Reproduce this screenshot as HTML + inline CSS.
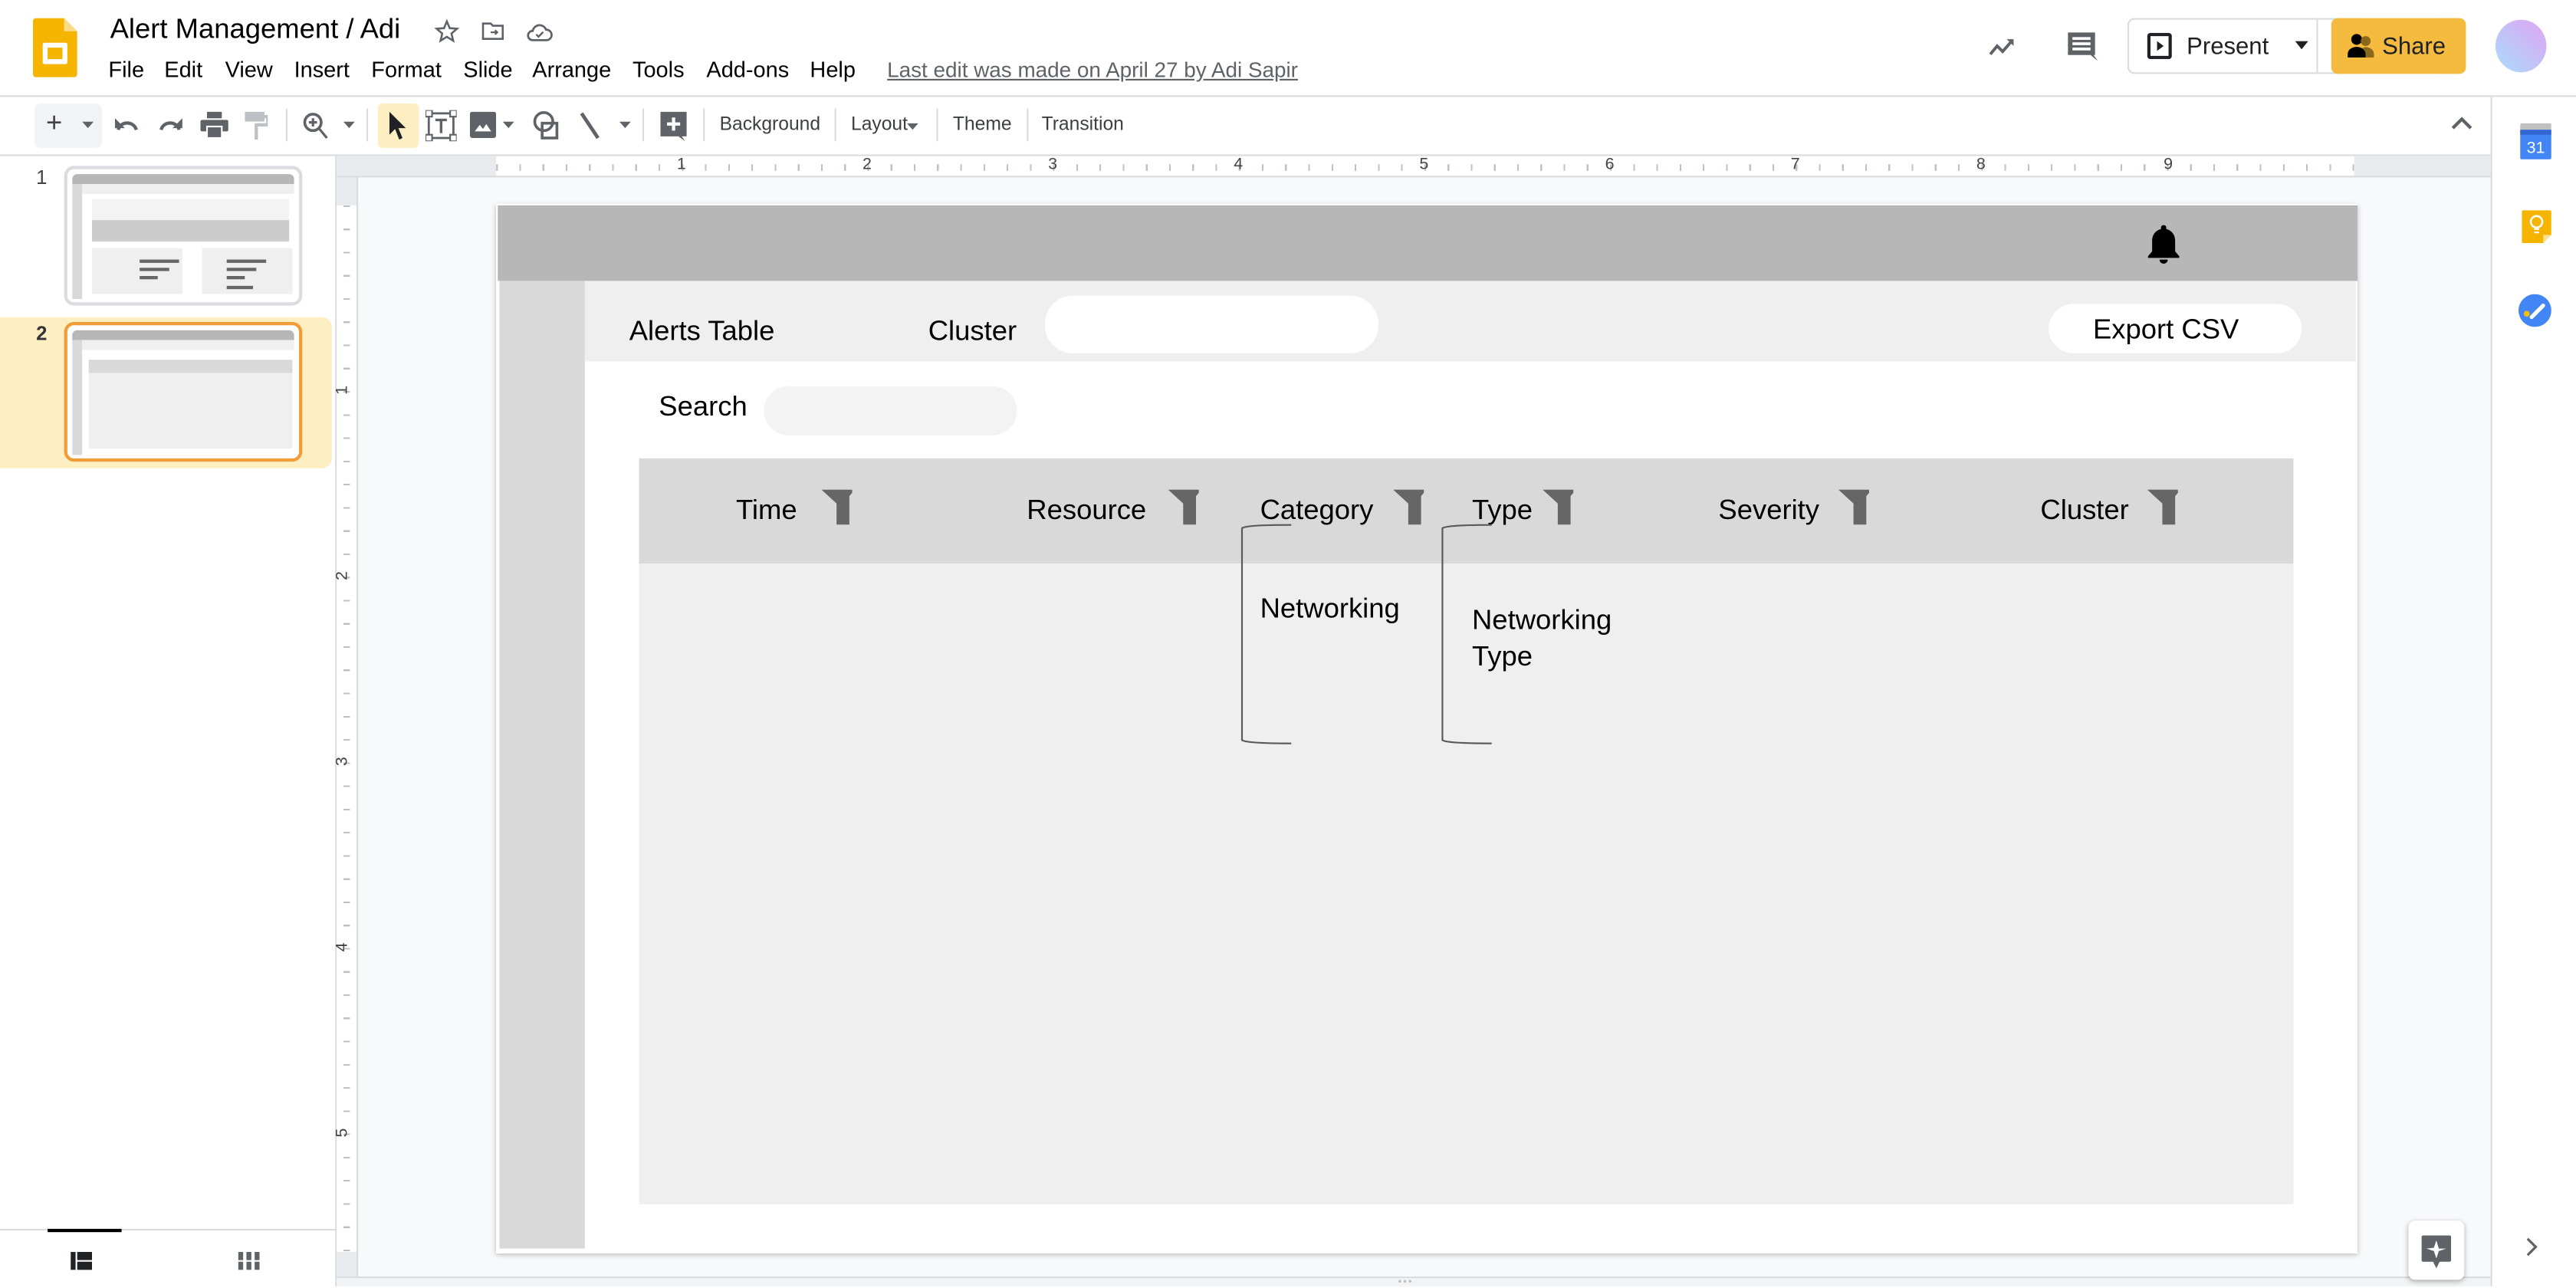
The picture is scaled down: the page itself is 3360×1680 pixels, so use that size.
<!DOCTYPE html>
<html><head><meta charset="utf-8">
<style>
*{box-sizing:border-box;margin:0;padding:0}
html,body{width:3360px;height:1678px;overflow:hidden;background:#fff}
#w{position:absolute;left:0;top:0;width:1568px;height:783px;transform:scale(2.142857);transform-origin:0 0;font-family:"Liberation Sans",Arial,sans-serif;color:#202124}
.a{position:absolute}
.mi{position:absolute;top:35px;font-size:13.5px;color:#000}
.tb{font-size:11.5px;color:#3c4043;top:70px}
.sep{position:absolute;top:66px;width:1px;height:20px;background:#dadce0}
.h{position:absolute;top:301px;font-size:17px;color:#000}
.f{position:absolute;top:298px}
.st{font-size:17px;color:#000;position:absolute}
</style></head><body><div id="w">

<!-- logo -->
<svg class="a" style="left:20px;top:11px" width="27" height="36" viewBox="0 0 27 36"><path d="M2 0h17l8 8v26a2 2 0 0 1-2 2H2a2 2 0 0 1-2-2V2a2 2 0 0 1 2-2z" fill="#f4b400"/><path d="M19 0l8 8h-8z" fill="#fadb86"/><rect x="6" y="15" width="15" height="13" rx="1" fill="#fff"/><rect x="9" y="18" width="9" height="7" fill="#f4b400"/></svg>
<div class="a" style="left:67px;top:8px;font-size:17px;color:#000">Alert Management / Adi</div>
<svg class="a" style="left:264px;top:11px" width="16" height="16" viewBox="0 0 24 24"><path d="M12 3l2.6 6.2 6.7.5-5.1 4.4 1.6 6.6L12 17.1 6.2 20.7l1.6-6.6-5.1-4.4 6.7-.5z" fill="none" stroke="#5f6368" stroke-width="1.8"/></svg>
<svg class="a" style="left:292px;top:11px" width="16" height="16" viewBox="0 0 24 24"><path d="M3 5h7l2 2h9v12H3z" fill="none" stroke="#5f6368" stroke-width="1.8"/><path d="M10 13h6m-2-2l2 2-2 2" fill="none" stroke="#5f6368" stroke-width="1.6"/></svg>
<svg class="a" style="left:320px;top:12px" width="17" height="15" viewBox="0 0 24 20"><path d="M6 17a4 4 0 0 1 0-8 6 6 0 0 1 11.5-1A4.5 4.5 0 0 1 18 17z" fill="none" stroke="#5f6368" stroke-width="1.8"/><path d="M9 12l2 2 4-4" fill="none" stroke="#5f6368" stroke-width="1.6"/></svg>
<div class="mi" style="left:66px">File</div>
<div class="mi" style="left:100px">Edit</div>
<div class="mi" style="left:137px">View</div>
<div class="mi" style="left:179px">Insert</div>
<div class="mi" style="left:226px">Format</div>
<div class="mi" style="left:282px">Slide</div>
<div class="mi" style="left:324px">Arrange</div>
<div class="mi" style="left:385px">Tools</div>
<div class="mi" style="left:430px">Add-ons</div>
<div class="mi" style="left:493px">Help</div>
<div class="a" style="left:540px;top:35px;font-size:13px;color:#5f6368;text-decoration:underline">Last edit was made on April 27 by Adi Sapir</div>

<!-- right header -->
<svg class="a" style="left:1208px;top:18px" width="22" height="20" viewBox="0 0 24 24"><path d="M3 18l5-6 4 4 7-8" fill="none" stroke="#5f6368" stroke-width="2.2"/><path d="M15 7h5v5z" fill="#5f6368"/></svg>
<svg class="a" style="left:1256px;top:17px" width="22" height="22" viewBox="0 0 24 24"><path d="M3 3h18v15H20l3 4-5-4H3z" fill="#5f6368"/><path d="M6 7h12M6 10.5h12M6 14h12" stroke="#fff" stroke-width="1.8"/></svg>
<div class="a" style="left:1295px;top:11px;width:144px;height:34px;border:1px solid #dadce0;border-radius:4px"></div>
<div class="a" style="left:1410px;top:11px;width:1px;height:34px;background:#dadce0"></div>
<svg class="a" style="left:1307px;top:20px" width="15" height="16" viewBox="0 0 15 16"><rect x="1" y="1" width="13" height="14" rx="1" fill="none" stroke="#202124" stroke-width="2"/><path d="M6 5l4 3-4 3z" fill="#202124"/></svg>
<div class="a" style="left:1331px;top:21px;font-size:14.5px;color:#202124">Present</div>
<svg class="a" style="left:1397px;top:25px" width="8" height="5"><path d="M0 0h8L4 5z" fill="#202124"/></svg>
<div class="a" style="left:1419px;top:11px;width:82px;height:34px;background:#f4bb3e;border-radius:4px"></div>
<svg class="a" style="left:1429px;top:20px" width="18" height="15" viewBox="0 0 18 15"><circle cx="5.5" cy="4" r="3.3" fill="#000"/><path d="M0 15v-2c0-3 3-4.5 5.5-4.5S11 10 11 13v2z" fill="#000"/><circle cx="11" cy="5" r="3" fill="#8a6a1a"/><path d="M11 15v-2c0-2-1-3-2-3.8 1-.4 1.5-.5 2-.5 2.5 0 5 1.5 5 4.3v2z" fill="#8a6a1a"/></svg>
<div class="a" style="left:1450px;top:21px;font-size:14.5px;color:#202124">Share</div>
<div class="a" style="left:1519px;top:12px;width:31px;height:32px;border-radius:50%;background:linear-gradient(225deg,#e0a4f3,#a9dcfb)"></div>

<div class="a" style="left:0;top:58px;width:1568px;height:1px;background:#dadce0"></div>

<!-- toolbar -->
<div class="a" style="left:21px;top:63px;width:41px;height:27px;background:#f1f3f4;border-radius:4px"></div>
<div class="a" style="left:28px;top:65px;font-size:17px;color:#444">+</div>
<svg class="a" style="left:50px;top:74px" width="7" height="4"><path d="M0 0h7L3.5 4z" fill="#5f6368"/></svg>
<svg class="a" style="left:69px;top:68px" width="16" height="14" viewBox="0 0 16 14"><path d="M3 11c1-5 9-6 11 0" fill="none" stroke="#5f6368" stroke-width="2"/><path d="M1 4v6h6z" fill="#5f6368"/></svg>
<svg class="a" style="left:96px;top:68px" width="16" height="14" viewBox="0 0 16 14"><path d="M13 11c-1-5-9-6-11 0" fill="none" stroke="#5f6368" stroke-width="2"/><path d="M15 4v6H9z" fill="#5f6368"/></svg>
<svg class="a" style="left:122px;top:68px" width="17" height="16" viewBox="0 0 17 16"><rect x="4" y="0" width="9" height="4" fill="#5f6368"/><rect x="0" y="5" width="17" height="7" rx="1" fill="#5f6368"/><rect x="4" y="9" width="9" height="7" fill="#5f6368" stroke="#fff"/></svg>
<svg class="a" style="left:149px;top:68px" width="14" height="17" viewBox="0 0 14 17"><rect x="0" y="0" width="12" height="6" fill="#bdc1c6"/><path d="M12 3h2v5H7v9" fill="none" stroke="#bdc1c6" stroke-width="2"/></svg>
<div class="sep" style="left:174px"></div>
<svg class="a" style="left:184px;top:68px" width="16" height="17" viewBox="0 0 16 17"><circle cx="6.5" cy="6.5" r="5" fill="none" stroke="#5f6368" stroke-width="1.7"/><path d="M10 10l5 6M4 6.5h5M6.5 4v5" stroke="#5f6368" stroke-width="1.5"/></svg>
<svg class="a" style="left:209px;top:74px" width="7" height="4"><path d="M0 0h7L3.5 4z" fill="#5f6368"/></svg>
<div class="sep" style="left:223px"></div>
<div class="a" style="left:230px;top:63px;width:25px;height:27px;background:#feefc3;border-radius:3px"></div>
<svg class="a" style="left:237px;top:68px" width="11" height="17" viewBox="0 0 11 17"><path d="M0 0v14l3.5-3.5L6 17l2-1-2.5-6H10z" fill="#202124"/></svg>
<svg class="a" style="left:259px;top:67px" width="19" height="19" viewBox="0 0 19 19"><rect x="2" y="2" width="15" height="15" fill="none" stroke="#5f6368" stroke-width="1.3"/><rect x="0" y="0" width="4" height="4" fill="#fff" stroke="#5f6368"/><rect x="15" y="0" width="4" height="4" fill="#fff" stroke="#5f6368"/><rect x="0" y="15" width="4" height="4" fill="#fff" stroke="#5f6368"/><rect x="15" y="15" width="4" height="4" fill="#fff" stroke="#5f6368"/><path d="M6 6h7M9.5 6v8" stroke="#5f6368" stroke-width="1.6"/></svg>
<svg class="a" style="left:286px;top:68px" width="16" height="16" viewBox="0 0 16 16"><rect width="16" height="16" rx="1.5" fill="#5f6368"/><path d="M3 12l3-4 2 2.5 2-3 3 4.5z" fill="#fff"/></svg>
<svg class="a" style="left:306px;top:74px" width="7" height="4"><path d="M0 0h7L3.5 4z" fill="#5f6368"/></svg>
<svg class="a" style="left:324px;top:67px" width="17" height="18" viewBox="0 0 17 18"><circle cx="7" cy="7" r="5.5" fill="none" stroke="#5f6368" stroke-width="1.7"/><rect x="6" y="8" width="9" height="9" fill="none" stroke="#5f6368" stroke-width="1.7"/></svg>
<svg class="a" style="left:352px;top:68px" width="14" height="17" viewBox="0 0 14 17"><path d="M2 1l10 15" stroke="#5f6368" stroke-width="2.2"/></svg>
<svg class="a" style="left:377px;top:74px" width="7" height="4"><path d="M0 0h7L3.5 4z" fill="#5f6368"/></svg>
<div class="sep" style="left:391px"></div>
<svg class="a" style="left:402px;top:68px" width="16" height="18" viewBox="0 0 16 18"><path d="M0 0h16v15h-3l2 3-4-3H0z" fill="#5f6368"/><path d="M8 3.5v8M4 7.5h8" stroke="#fff" stroke-width="2"/></svg>
<div class="sep" style="left:428px"></div>
<div class="a tb" style="left:438px">Background</div>
<div class="sep" style="left:508px"></div>
<div class="a tb" style="left:518px">Layout</div>
<svg class="a" style="left:552px;top:75px" width="7" height="4"><path d="M0 0h7L3.5 4z" fill="#5f6368"/></svg>
<div class="sep" style="left:570px"></div>
<div class="a tb" style="left:580px">Theme</div>
<div class="sep" style="left:625px"></div>
<div class="a tb" style="left:634px">Transition</div>
<svg class="a" style="left:1492px;top:71px" width="13" height="8"><path d="M1 7l5.5-5.5L12 7" fill="none" stroke="#5f6368" stroke-width="2"/></svg>

<div class="a" style="left:0;top:94px;width:1568px;height:1px;background:#dadce0"></div>

<!-- left panel -->
<div class="a" style="left:204px;top:95px;width:1px;height:688px;background:#dadce0"></div>
<div class="a" style="left:22px;top:101px;font-size:12px;color:#444">1</div>
<div class="a" style="left:39px;top:101px;width:145px;height:85px;border:2px solid #dadce0;border-radius:6px;overflow:hidden;background:#fff">
 <div class="a" style="left:3px;top:3px;width:135px;height:6px;background:#b7b7b7;border-radius:3px 3px 0 0"></div>
 <div class="a" style="left:3px;top:9px;width:6px;height:70px;background:#d9d9d9"></div>
 <div class="a" style="left:9px;top:9px;width:129px;height:6px;background:#efefef"></div>
 <div class="a" style="left:15px;top:18px;width:120px;height:26px;background:#f3f3f3"></div>
 <div class="a" style="left:15px;top:31px;width:120px;height:13px;background:#cccccc"></div>
 <div class="a" style="left:15px;top:48px;width:55px;height:28px;background:#efefef"></div>
 <div class="a" style="left:82px;top:48px;width:55px;height:28px;background:#efefef"></div>
 <div class="a" style="left:44px;top:55px;width:24px;height:2px;background:#666"></div>
 <div class="a" style="left:44px;top:60px;width:18px;height:2px;background:#666"></div>
 <div class="a" style="left:44px;top:65px;width:11px;height:2px;background:#666"></div>
 <div class="a" style="left:97px;top:55px;width:24px;height:2px;background:#666"></div>
 <div class="a" style="left:97px;top:60px;width:18px;height:2px;background:#666"></div>
 <div class="a" style="left:97px;top:65px;width:11px;height:2px;background:#666"></div>
 <div class="a" style="left:97px;top:71px;width:16px;height:2px;background:#666"></div>
</div>
<div class="a" style="left:0;top:193px;width:202px;height:92px;background:#feefc3;border-radius:0 6px 6px 0"></div>
<div class="a" style="left:22px;top:196px;font-size:12px;color:#333;font-weight:bold">2</div>
<div class="a" style="left:39px;top:196px;width:145px;height:85px;border:2px solid #f29c38;border-radius:6px;overflow:hidden;background:#fff">
 <div class="a" style="left:3px;top:3px;width:135px;height:6px;background:#b7b7b7;border-radius:3px 3px 0 0"></div>
 <div class="a" style="left:3px;top:9px;width:6px;height:70px;background:#d9d9d9"></div>
 <div class="a" style="left:9px;top:9px;width:129px;height:6px;background:#efefef"></div>
 <div class="a" style="left:13px;top:21px;width:124px;height:54px;background:#efefef"></div>
 <div class="a" style="left:13px;top:21px;width:124px;height:8px;background:#d9d9d9"></div>
</div>
<div class="a" style="left:0;top:748px;width:204px;height:1px;background:#dadce0"></div>
<div class="a" style="left:29px;top:748px;width:45px;height:2px;background:#000"></div>
<svg class="a" style="left:43px;top:762px" width="13" height="11"><rect x="0" y="0" width="3" height="11" fill="#202124"/><rect x="4" y="0" width="9" height="5" fill="#202124"/><rect x="4" y="6" width="9" height="5" fill="#202124"/></svg>
<svg class="a" style="left:145px;top:762px" width="13" height="11"><path d="M0 0h3v5H0zM5 0h3v5H5zM10 0h3v5h-3zM0 6h3v5H0zM5 6h3v5H5zM10 6h3v5h-3z" fill="#5f6368"/></svg>

<!-- canvas -->
<div class="a" style="left:205px;top:95px;width:1311px;height:688px;background:#f8f9fa"></div>
<div class="a" style="left:205px;top:95px;width:1311px;height:13px;background:#e8eaed"></div>
<div class="a" style="left:302px;top:95px;width:1131px;height:12px;background:#fff repeating-linear-gradient(90deg,#bdc1c6 0 1px,transparent 1px 14.125px);background-size:100% 4px;background-position:0 5px;background-repeat:no-repeat"></div>
<div class="a" style="left:205px;top:107px;width:1311px;height:1px;background:#dadce0"></div>
<div class="a" style="left:205px;top:108px;width:12px;height:670px;background:#e8eaed"></div>
<div class="a" style="left:205px;top:125px;width:12px;height:637px;background:#fff repeating-linear-gradient(180deg,#bdc1c6 0 1px,transparent 1px 14.125px);background-size:4px 100%;background-position:4px 0;background-repeat:no-repeat"></div>
<div class="a" style="left:217px;top:108px;width:1px;height:670px;background:#dadce0"></div>
<div class="a" style="font-size:10px;color:#444;top:95px;left:0;width:0">
<span class="a" style="left:412px">1</span><span class="a" style="left:525px">2</span><span class="a" style="left:638px">3</span><span class="a" style="left:751px">4</span><span class="a" style="left:864px">5</span><span class="a" style="left:977px">6</span><span class="a" style="left:1090px">7</span><span class="a" style="left:1203px">8</span><span class="a" style="left:1317px">9</span></div>
<div class="a" style="font-size:10px;color:#444;left:206px;top:0">
<span class="a" style="top:232px;transform:rotate(-90deg)">1</span><span class="a" style="top:345px;transform:rotate(-90deg)">2</span><span class="a" style="top:458px;transform:rotate(-90deg)">3</span><span class="a" style="top:571px;transform:rotate(-90deg)">4</span><span class="a" style="top:684px;transform:rotate(-90deg)">5</span></div>
<div class="a" style="left:205px;top:777px;width:1311px;height:6px;background:#f1f3f4;border-top:1px solid #dadce0"></div>

<!-- slide -->
<div class="a" style="left:302px;top:124px;width:1133px;height:639px;background:#fff;box-shadow:0 1px 3px rgba(0,0,0,.25)"></div>
<div class="a" style="left:303px;top:125px;width:1132px;height:46px;background:#b7b7b7"></div>
<svg class="a" style="left:1306px;top:137px" width="22" height="24" viewBox="0 0 22 24"><path d="M11 0c1 0 1.6.6 1.6 1.6v.8C16 3.3 18 6 18 9.5v6.5l2.5 3v1H1.5v-1L4 16V9.5C4 6 6 3.3 9.4 2.4v-.8C9.4.6 10 0 11 0z" fill="#000"/><path d="M8.5 21h5a2.5 2.5 0 0 1-5 0z" fill="#000"/></svg>
<div class="a" style="left:304px;top:171px;width:52px;height:589px;background:#d9d9d9"></div>
<div class="a" style="left:356px;top:171px;width:1078px;height:49px;background:#efefef"></div>
<div class="st" style="left:383px;top:192px">Alerts Table</div>
<div class="st" style="left:565px;top:192px">Cluster</div>
<div class="a" style="left:636px;top:180px;width:203px;height:35px;background:#fff;border-radius:17px"></div>
<div class="a" style="left:1247px;top:185px;width:154px;height:30px;background:#fff;border-radius:15px"></div>
<div class="st" style="left:1274px;top:191px">Export CSV</div>
<div class="st" style="left:401px;top:238px">Search</div>
<div class="a" style="left:465px;top:235px;width:154px;height:30px;background:#f3f3f3;border-radius:15px"></div>
<div class="a" style="left:389px;top:279px;width:1007px;height:454px;background:#efefef"></div>
<div class="a" style="left:389px;top:279px;width:1007px;height:64px;background:#d9d9d9"></div>

<div class="h" style="left:448px">Time</div>
<div class="h" style="left:625px">Resource</div>
<div class="h" style="left:767px">Category</div>
<div class="h" style="left:896px">Type</div>
<div class="h" style="left:1046px">Severity</div>
<div class="h" style="left:1242px">Cluster</div>
<svg width="0" height="0" style="position:absolute"><defs><polygon id="fn" points="0,0 18.7,0 18.7,2 17,4 17,21.3 9.2,21.3 9.2,8.5" fill="#666"/></defs></svg>
<svg class="f" style="left:500px" width="19" height="22"><use href="#fn"/></svg>
<svg class="f" style="left:711px" width="19" height="22"><use href="#fn"/></svg>
<svg class="f" style="left:848px" width="19" height="22"><use href="#fn"/></svg>
<svg class="f" style="left:939px" width="19" height="22"><use href="#fn"/></svg>
<svg class="f" style="left:1119px" width="19" height="22"><use href="#fn"/></svg>
<svg class="f" style="left:1307px" width="19" height="22"><use href="#fn"/></svg>

<svg class="a" style="left:750px;top:315px" width="170" height="142"><path d="M36 4.5C20 4.5 8 5 6 6.5V135.5C8 137 20 137.5 36 137.5" fill="none" stroke="#595959" stroke-width="1"/><path d="M158 4.5C142 4.5 130 5 128 6.5V135.5C130 137 142 137.5 158 137.5" fill="none" stroke="#595959" stroke-width="1"/></svg>
<div class="st" style="left:767px;top:361px">Networking</div>
<div class="st" style="left:896px;top:367px;line-height:21.5px">Networking<br>Type</div>

<!-- right panel -->
<div class="a" style="left:1516px;top:59px;width:52px;height:724px;background:#fff;border-left:1px solid #dadce0"></div>
<svg class="a" style="left:1534px;top:75px" width="19" height="22" viewBox="0 0 19 22"><rect x="0" y="0" width="19" height="5" rx="1" fill="#c1c1c1"/><rect x="0" y="4" width="19" height="18" rx="1" fill="#4285f4"/><rect x="0" y="4" width="19" height="3" fill="#3367d6"/><text x="9.5" y="18" font-size="10" fill="#fff" text-anchor="middle" font-family="Liberation Sans,sans-serif">31</text></svg>
<svg class="a" style="left:1535px;top:128px" width="18" height="20" viewBox="0 0 18 20"><path d="M1 0h16a1 1 0 0 1 1 1v14l-5 5H1a1 1 0 0 1-1-1V1a1 1 0 0 1 1-1z" fill="#f4b400"/><path d="M18 15l-5 5v-5z" fill="#fbe18f"/><circle cx="9" cy="7" r="3.5" fill="none" stroke="#fff" stroke-width="1.2"/><path d="M7.5 11.5h3M7.5 13.5h3" stroke="#fff" stroke-width="1"/></svg>
<svg class="a" style="left:1533px;top:179px" width="20" height="20" viewBox="0 0 20 20"><circle cx="10" cy="10" r="10" fill="#4285f4"/><circle cx="5" cy="12" r="1.8" fill="#fbbc04"/><path d="M8 14l7-7" stroke="#fff" stroke-width="2.4" stroke-linecap="round"/></svg>
<svg class="a" style="left:1537px;top:753px" width="8" height="12"><path d="M1.5 1l5 5-5 5" fill="none" stroke="#5f6368" stroke-width="1.5"/></svg>
<div class="a" style="left:1466px;top:743px;width:34px;height:36px;background:#fff;border-radius:4px;box-shadow:0 1px 3px rgba(0,0,0,.3)"></div>
<svg class="a" style="left:1474px;top:752px" width="18" height="20" viewBox="0 0 18 20"><path d="M1 0h16a1 1 0 0 1 1 1v14a1 1 0 0 1-1 1h-6l-2 4-2-4H1a1 1 0 0 1-1-1V1a1 1 0 0 1 1-1z" fill="#5f6368"/><path d="M9 3l1.5 5L15 8l-4.5 1.5L9 14 7.5 9.5 3 8l4.5-.5z" fill="#fff"/></svg>
<div class="a" style="left:851px;top:778px;font-size:6px;color:#bbb;letter-spacing:1px">•••</div>
</div></body></html>
